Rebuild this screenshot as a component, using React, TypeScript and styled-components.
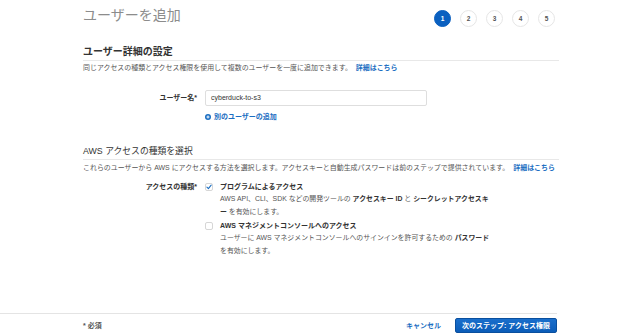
import React from 'react'
import styled, { createGlobalStyle } from 'styled-components'

const GlobalStyle = createGlobalStyle`
  html, body {
    margin: 0;
    padding: 0;
    background: #ffffff;
  }
  body {
    font-family: "Liberation Sans", "Noto Sans CJK JP", sans-serif;
    color: #444444;
  }
`

const Shell = styled.div`
  display: flex;
  flex-direction: column;
  height: 336px;
  width: 640px;
  overflow: hidden;
`

const Content = styled.div`
  flex: 1;
  padding-left: 83px;
  width: 476px;
`

const Header = styled.div`
  display: flex;
  justify-content: space-between;
  align-items: flex-start;
  padding-top: 5px;
`

const Title = styled.h1`
  margin: 0;
  font-size: 14px;
  line-height: 20px;
  font-weight: 400;
  color: #8c8c8c;
`

const Steps = styled.div`
  display: flex;
  gap: 9px;
  margin-top: 5px;
  margin-right: 4px;
`

const Step = styled.div<{ $active?: boolean }>`
  width: 17px;
  height: 17px;
  box-sizing: border-box;
  border-radius: 50%;
  display: flex;
  align-items: center;
  justify-content: center;
  font-size: 6.5px;
  font-weight: 700;
  color: ${p => (p.$active ? '#ffffff' : '#555555')};
  background: ${p => (p.$active ? '#0b60c0' : '#ffffff')};
  border: 1px solid ${p => (p.$active ? '#0b60c0' : '#e6e6e6')};
`

const SectionHeading = styled.h2<{ $bold?: boolean; $gap: number }>`
  margin: ${p => p.$gap}px 0 0;
  padding-bottom: 1px;
  font-size: ${p => (p.$bold ? 10 : 8.8)}px;
  line-height: 14px;
  font-weight: ${p => (p.$bold ? 700 : 400)};
  color: #333333;
  border-bottom: 1px solid #e8e8e8;
`

const Desc = styled.p<{ $gap: number }>`
  margin: ${p => p.$gap}px 0 0;
  font-size: 6.95px;
  line-height: 10px;
  color: #555555;
  white-space: nowrap;
`

const Link = styled.a`
  color: #1b6ec2;
  font-weight: 700;
  text-decoration: none;
  margin-left: 4px;
`

const FormRow = styled.div<{ $gap: number }>`
  display: grid;
  grid-template-columns: 114px 1fr;
  column-gap: 8px;
  margin-top: ${p => p.$gap}px;
`

const Label = styled.div<{ $tall?: boolean }>`
  text-align: right;
  font-size: 7px;
  font-weight: 700;
  color: #333333;
  line-height: ${p => (p.$tall ? 16 : 10)}px;
`

const Input = styled.div`
  width: 222px;
  height: 16px;
  box-sizing: border-box;
  border: 1px solid #dedede;
  border-radius: 2px;
  padding-left: 5px;
  font-size: 7px;
  line-height: 14px;
  color: #333333;
`

const AddLink = styled.div`
  display: flex;
  align-items: center;
  gap: 3px;
  margin-top: 6px;
  font-size: 7px;
  line-height: 10px;
  font-weight: 700;
  color: #1b6ec2;
`

const Options = styled.div`
  display: flex;
  flex-direction: column;
  gap: 3px;
`

const Option = styled.div`
  display: grid;
  grid-template-columns: 8px 1fr;
  column-gap: 7px;
`

const Box = styled.div`
  width: 8px;
  height: 8px;
  box-sizing: border-box;
  margin-top: 1px;
  border: 1px solid #d6d6d6;
  border-radius: 2px;
  background: #ffffff;
  display: flex;
  align-items: center;
  justify-content: center;
`

const OptionTitle = styled.div`
  font-size: 7px;
  line-height: 10px;
  font-weight: 700;
  color: #333333;
`

const OptionDesc = styled.div`
  font-size: 6.9px;
  line-height: 13px;
  color: #555555;
  white-space: nowrap;

  b {
    color: #333333;
  }
`

const Footer = styled.div`
  border-top: 1px solid #e4e4e4;
  height: 22px;
  padding-left: 83px;
  width: 474px;
  display: flex;
  align-items: center;
  justify-content: space-between;
`

const Required = styled.span`
  font-size: 7px;
  font-weight: 700;
  color: #555555;
`

const Actions = styled.div`
  display: flex;
  align-items: center;
  gap: 14px;
`

const Cancel = styled.span`
  font-size: 7px;
  font-weight: 700;
  color: #1b6ec2;
`

const Primary = styled.button`
  height: 15px;
  width: 102px;
  padding: 0;
  border: 1px solid #0a4f9e;
  border-radius: 2px;
  background: linear-gradient(#1a6fcc, #0b5cb8);
  color: #ffffff;
  font-family: inherit;
  font-size: 7px;
  font-weight: 700;
  line-height: 13px;
`

const Check = () => (
  <svg width="6" height="6" viewBox="0 0 10 10">
    <path d="M1.5 5.2 L4 7.6 L8.6 1.8" fill="none" stroke="#1b6ec2" strokeWidth="1.8" strokeLinecap="round" strokeLinejoin="round" />
  </svg>
)

const PlusCircle = () => (
  <svg width="6" height="6" viewBox="0 0 10 10">
    <circle cx="5" cy="5" r="5" fill="#1b6ec2" />
    <path d="M5 2.4 V7.6 M2.4 5 H7.6" stroke="#ffffff" strokeWidth="1.6" />
  </svg>
)

const App = () => {
  return (
    <Shell>
      <GlobalStyle />
      <Content>
        <Header>
          <Title>ユーザーを追加</Title>
          <Steps>
            {[1, 2, 3, 4, 5].map(n => (
              <Step key={n} $active={n === 1}>{n}</Step>
            ))}
          </Steps>
        </Header>

        <SectionHeading $bold $gap={18}>ユーザー詳細の設定</SectionHeading>
        <Desc $gap={2}>
          同じアクセスの種類とアクセス権限を使用して複数のユーザーを一度に追加できます。
          <Link>詳細はこちら</Link>
        </Desc>

        <FormRow $gap={17}>
          <Label $tall>ユーザー名*</Label>
          <div>
            <Input>cyberduck-to-s3</Input>
            <AddLink>
              <PlusCircle />
              別のユーザーの追加
            </AddLink>
          </div>
        </FormRow>

        <SectionHeading $gap={22}>AWS アクセスの種類を選択</SectionHeading>
        <Desc $gap={3}>
          これらのユーザーから AWS にアクセスする方法を選択します。アクセスキーと自動生成パスワードは前のステップで提供されています。
          <Link>詳細はこちら</Link>
        </Desc>

        <FormRow $gap={9}>
          <Label>アクセスの種類*</Label>
          <Options>
            <Option>
              <Box><Check /></Box>
              <div>
                <OptionTitle>プログラムによるアクセス</OptionTitle>
                <OptionDesc>
                  AWS API、CLI、SDK などの開発ツールの <b>アクセスキー ID</b> と <b>シークレットアクセスキ<br />ー</b> を有効にします。
                </OptionDesc>
              </div>
            </Option>
            <Option>
              <Box />
              <div>
                <OptionTitle>AWS マネジメントコンソールへのアクセス</OptionTitle>
                <OptionDesc>
                  ユーザーに AWS マネジメントコンソールへのサインインを許可するための <b>パスワード</b><br />を有効にします。
                </OptionDesc>
              </div>
            </Option>
          </Options>
        </FormRow>
      </Content>

      <Footer>
        <Required>* 必須</Required>
        <Actions>
          <Cancel>キャンセル</Cancel>
          <Primary>次のステップ: アクセス権限</Primary>
        </Actions>
      </Footer>
    </Shell>
  )
}

export default App
